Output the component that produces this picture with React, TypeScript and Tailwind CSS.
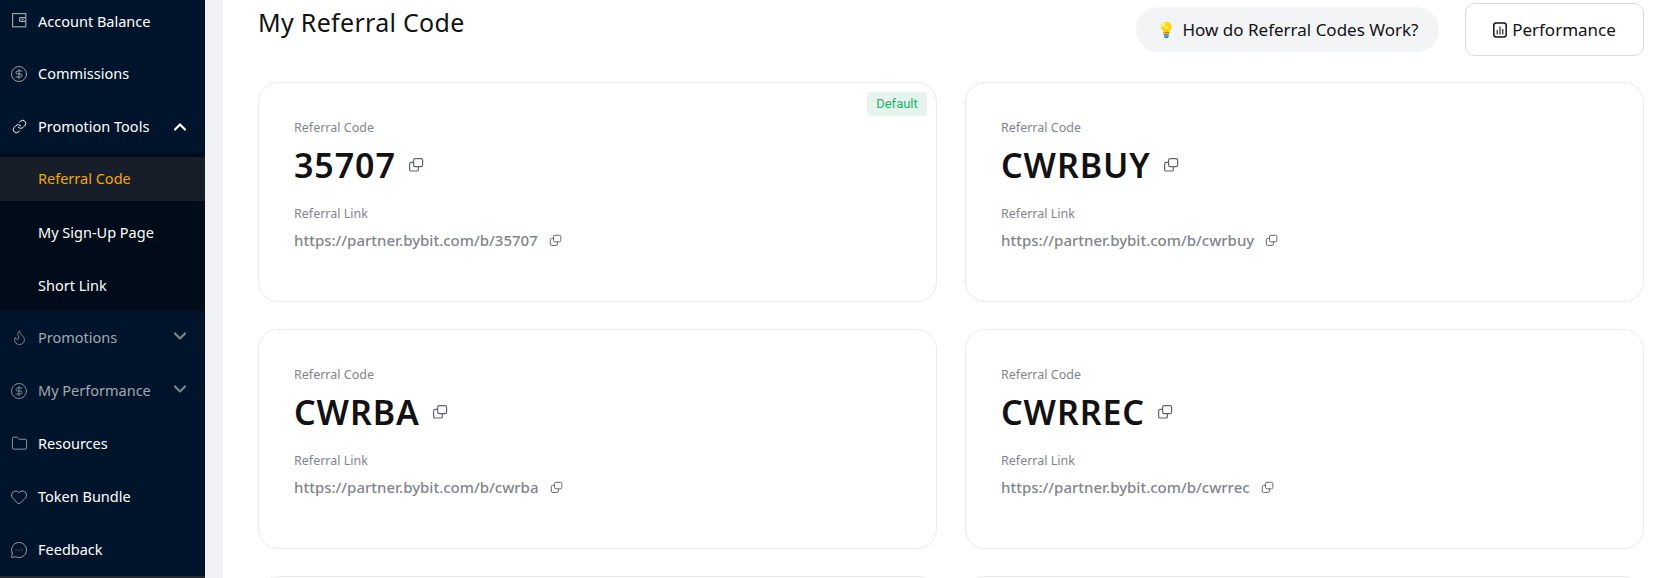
import { ChevronDown, ChevronUp, CircleDollarSign, Flame, Folder, Heart, Link, MessageCircleMore } from 'lucide-react';
import type { ReactNode } from 'react';

function WalletIcon() {
  return (
    <svg width="15" height="15" viewBox="0 0 15 15" fill="none" stroke="currentColor" strokeWidth="1.1" className="-mt-[2px] ml-[2px]">
      <rect x="0.6" y="0.6" width="13.2" height="13.2" />
      <path d="M13.5 4.6H8.2a.6.6 0 0 0-.6.6v2.6a.6.6 0 0 0 .6.6h5.3" />
      <path d="M9.5 6.5h2" />
    </svg>
  );
}

function CopyIcon({ size = 14 }: { size?: number }) {
  return (
    <svg width={size} height={size} viewBox="0 0 16 16" fill="none" stroke="currentColor" strokeWidth="1.2" className="text-[#5f6470]">
      <rect x="5.6" y="1.6" width="9" height="8" rx="1.6" />
      <path d="M5.6 5.4H3a1.6 1.6 0 0 0-1.4 1.6v5.4A1.6 1.6 0 0 0 3.2 14h5.6a1.6 1.6 0 0 0 1.6-1.6V9.6" />
    </svg>
  );
}

function PerformanceIcon() {
  return (
    <svg width="14" height="16" viewBox="0 0 14 16" fill="none" stroke="#121214">
      <rect x="0.8" y="1" width="12.4" height="14" rx="2.4" strokeWidth="1.5" />
      <path d="M4.2 8v4.4M7 4.6v7.8M9.8 7v5.4" strokeWidth="1.1" />
    </svg>
  );
}

function SideItem({ icon, label, dim, chevron, first }: { icon?: ReactNode; label: string; dim?: boolean; chevron?: 'up' | 'down'; first?: boolean }) {
  return (
    <div className={`flex items-center pl-[10px] pr-[15px] text-[14.5px] ${first ? 'h-[51px]' : 'h-[53px]'} ${dim ? 'text-[#a3a7ad]' : 'text-white'}`}>
      <span className={`flex w-[28px] shrink-0 ${dim ? 'text-[#8f949b]' : 'text-[#a8acb2]'}`}>{icon}</span>
      <span className="flex-1 whitespace-nowrap">{label}</span>
      {chevron === 'up' && <ChevronUp size={20} strokeWidth={2.6} className="text-white" />}
      {chevron === 'down' && <ChevronDown size={20} strokeWidth={2.6} className="-mt-[3px] text-[#7d848c]" />}
    </div>
  );
}

function Sidebar() {
  return (
    <aside className="flex h-full w-[205px] shrink-0 flex-col overflow-hidden bg-[#00152b]">
      <div className="-mt-[4px]">
        <SideItem first icon={<WalletIcon />} label="Account Balance" />
        <SideItem icon={<CircleDollarSign size={18} strokeWidth={1.2} />} label="Commissions" />
        <SideItem icon={<Link size={15} strokeWidth={1.6} className="ml-[2px] text-white" />} label="Promotion Tools" chevron="up" />
        <div className="bg-[#000c1a] pt-[4px]">
          <div className="flex h-[44px] items-center bg-[#171e29] pl-[38px] text-[14.5px] text-[#f7a600]">Referral Code</div>
          <div className="mt-[5px] flex h-[53px] items-center pl-[38px] text-[14.5px] text-white">My Sign-Up Page</div>
          <div className="flex h-[52px] items-center pl-[38px] pt-[2px] text-[14.5px] text-white">Short Link</div>
        </div>
        <SideItem icon={<Flame size={17} strokeWidth={1.2} className="ml-[1px]" />} label="Promotions" dim chevron="down" />
        <SideItem icon={<CircleDollarSign size={18} strokeWidth={1.2} />} label="My Performance" dim chevron="down" />
        <SideItem icon={<Folder size={17} strokeWidth={1.2} className="ml-[1px]" />} label="Resources" />
        <SideItem icon={<Heart size={18} strokeWidth={1.2} />} label="Token Bundle" />
        <SideItem icon={<MessageCircleMore size={18} strokeWidth={1.2} />} label="Feedback" />
      </div>
      <div className="flex-1 bg-[#262a31]" />
    </aside>
  );
}

function CodeCard({ code, link, isDefault }: { code: string; link: string; isDefault?: boolean }) {
  return (
    <div className="relative h-[220px] rounded-[20px] border border-[#e9eaef] bg-white pl-[35px] pt-[36px]">
      {isDefault && (
        <span className="absolute right-[9px] top-[9px] flex h-[24px] w-[60px] items-center justify-center rounded-[4px] bg-[#e5f5ed] font-['Roboto',sans-serif] text-[13px] text-[#20b26c]">
          Default
        </span>
      )}
      <div className="text-[12.5px] leading-[18px] text-[#81858c]">Referral Code</div>
      <div className="mt-[6px] flex items-center gap-[12px]">
        <span className="text-[34px] font-semibold leading-[44px] tracking-[0.9px] text-[#121214]">{code}</span>
        <CopyIcon size={16} />
      </div>
      <div className="mt-[18px] text-[12.5px] leading-[18px] text-[#81858c]">Referral Link</div>
      <div className="mt-[7px] flex items-center gap-[11px]">
        <span className="text-[15px] font-medium leading-[20px] text-[#81858c]">{link}</span>
        <CopyIcon size={13} />
      </div>
    </div>
  );
}

export default function App() {
  return (
    <div className="flex h-[578px] w-[1669px] overflow-hidden bg-white font-['Noto_Sans',sans-serif]">
      <Sidebar />
      <div className="h-full w-[18px] shrink-0 bg-[#f0f1f5]" />
      <main className="flex-1 overflow-hidden pl-[35px] pr-[25px]">
        <div className="flex h-[82px] items-start justify-between">
          <h1 className="mt-[5px] text-[25px] leading-[34px] tracking-[0.3px] text-[#121214]">My Referral Code</h1>
          <div className="mt-[3px] flex items-start gap-[26px]">
            <button className="mt-[4px] flex h-[45px] w-[303px] items-center justify-center gap-[7px] rounded-full bg-[#f3f4f6] text-[17px] text-[#121214]">
              <span className="text-[15px]">💡</span>
              How do Referral Codes Work?
            </button>
            <button className="flex h-[53px] w-[179px] items-center justify-center gap-[5px] rounded-[10px] border border-[#d9dadd] bg-white text-[17px] text-[#121214]">
              <PerformanceIcon />
              Performance
            </button>
          </div>
        </div>
        <div className="grid grid-cols-2 gap-x-[28px] gap-y-[27px]">
          <CodeCard code="35707" link="https://partner.bybit.com/b/35707" isDefault />
          <CodeCard code="CWRBUY" link="https://partner.bybit.com/b/cwrbuy" />
          <CodeCard code="CWRBA" link="https://partner.bybit.com/b/cwrba" />
          <CodeCard code="CWRREC" link="https://partner.bybit.com/b/cwrrec" />
          <div className="h-[220px] rounded-[20px] border border-[#e9eaef] bg-white" />
          <div className="h-[220px] rounded-[20px] border border-[#e9eaef] bg-white" />
        </div>
      </main>
    </div>
  );
}
